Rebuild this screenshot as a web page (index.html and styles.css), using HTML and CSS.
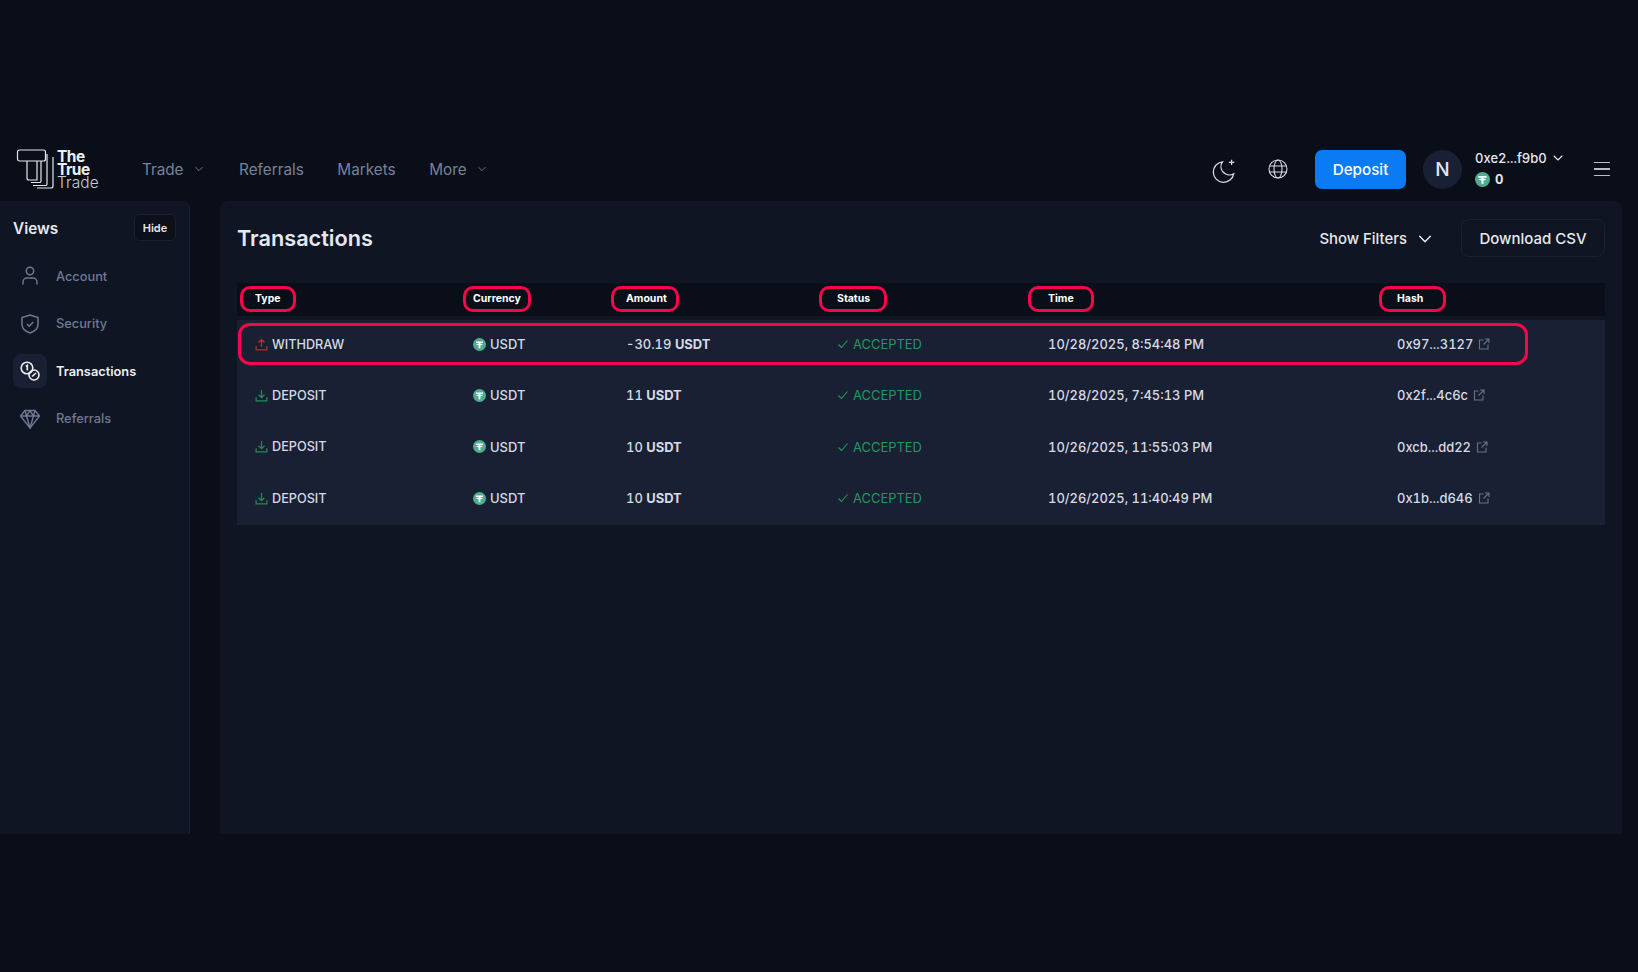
FILE: index.html
```html
<!DOCTYPE html>
<html lang="en">

<head>
  <meta charset="UTF-8">
  <meta name="viewport" content="width=device-width, initial-scale=1.0">
  <title>Transactions</title>
  <link rel="stylesheet" href="styles.css">
</head>

<body>
  <!-- icons used more than once -->
  <svg class="sprite" aria-hidden="true">
    <symbol id="chev" viewBox="0 0 12 12"><path d="M2 4l4 4 4-4" fill="none" stroke="currentColor" stroke-width="1.1" stroke-linecap="round" stroke-linejoin="round"/></symbol>
    <symbol id="tether" viewBox="0 0 16 16"><circle cx="8" cy="8" r="8" fill="#50ab8f"/><path d="M3.6 4.2h8.8v1.9H9.100v1.100c1.500.1 2.800.4 2.800.8s-1.300.7-2.800.8v3.700H6.900V8.800c-1.500-.1-2.800-.4-2.800-.8s1.300-.7 2.800-.8V6.100H3.600z" fill="#fff"/></symbol>
    <symbol id="down" viewBox="0 0 14 14"><path d="M7 1v8.200M3.800 6.200L7 9.300l3.200-3.100M1.200 9v3.800h11.600V9" fill="none" stroke="currentColor" stroke-width="1.400"/></symbol>
    <symbol id="up" viewBox="0 0 14 14"><path d="M7 9.800V1.800M3.800 4.800L7 1.600l3.200 3.200M1.200 8.500v4.300h11.600V8.500" fill="none" stroke="currentColor" stroke-width="1.400"/></symbol>
    <symbol id="check" viewBox="0 0 12 12"><path d="M1.500 6.500l3 3 6-7" fill="none" stroke="currentColor" stroke-width="1.100"/></symbol>
    <symbol id="ext" viewBox="0 0 12 12"><path d="M5.500 2H1.500v9H10V6.500M7 1h4v4M11 1L5.500 6.500" fill="none" stroke="currentColor" stroke-width="1.100"/></symbol>
  </svg>

  <header class="topbar">
    <a class="logo">
      <svg class="logo-mark" viewBox="0 0 40 42" fill="none" stroke="#e4e6ec" stroke-width="1.200">
        <path d="M3.500 2h24a2 2 0 0 1 2 2v7a2 2 0 0 1-2 2h-24a2 2 0 0 1-2-2V4a2 2 0 0 1 2-2z"/>
        <path d="M11 13v17a2 2 0 0 0 2 2h8V13"/>
        <path d="M25 13v20a1.500 1.500 0 0 1-1.500 1.500H15"/>
        <path d="M31 6v30a1.500 1.500 0 0 1-1.500 1.500H17"/>
        <path d="M37 9v29a2 2 0 0 1-2 2H21"/>
      </svg>
      <span class="logo-text"><b>The</b><b>True</b><span>Trade</span></span>
    </a>

    <nav class="topnav">
      <a class="topnav-link">Trade <svg class="chev-sm"><use href="#chev"/></svg></a>
      <a class="topnav-link">Referrals</a>
      <a class="topnav-link">Markets</a>
      <a class="topnav-link">More <svg class="chev-sm"><use href="#chev"/></svg></a>
    </nav>

    <div class="topbar-right">
      <svg class="icon-moon" viewBox="0 0 24 24" fill="none" stroke="#d8dbe4" stroke-width="1.200">
        <path d="M10.500 3.500a9.500 9.500 0 1 0 10.500 11 7.800 7.800 0 0 1-10.500-11z"/>
        <path d="M19 1.500v5M16.500 4h5"/>
      </svg>
      <svg class="icon-globe" viewBox="0 0 20 20" fill="none" stroke="#d8dbe4" stroke-width="1.100">
        <circle cx="10" cy="10" r="9"/>
        <ellipse cx="10" cy="10" rx="4" ry="9"/>
        <path d="M1.500 7h17M1.500 13h17"/>
      </svg>
      <button class="btn-deposit">Deposit</button>
      <div class="avatar">N</div>
      <div class="wallet">
        <div class="wallet-addr">0xe2...f9b0 <svg class="chev-wallet"><use href="#chev"/></svg></div>
        <div class="wallet-bal"><svg class="coin-lg"><use href="#tether"/></svg> 0</div>
      </div>
      <div class="burger"><i></i><i></i><i></i></div>
    </div>
  </header>

  <div class="layout">
    <aside class="sidebar">
      <div class="views-head">
        <h2>Views</h2>
        <button class="btn-hide">Hide</button>
      </div>
      <a class="side-link">
        <span class="side-icon">
          <svg viewBox="0 0 20 20" fill="none" stroke="currentColor" stroke-width="1.500"><circle cx="10" cy="5" r="3.700"/><path d="M3 18.500v-2.500a4 4 0 0 1 4-4h6a4 4 0 0 1 4 4v2.500"/></svg>
        </span>
        Account
      </a>
      <a class="side-link">
        <span class="side-icon">
          <svg viewBox="0 0 20 20" fill="none" stroke="currentColor" stroke-width="1.500"><path d="M10 1l8 2.500v7c0 4.500-3.500 7-8 8.500-4.500-1.500-8-4-8-8.500v-7z"/><path d="M7 10l2.200 2.200L13.200 8"/></svg>
        </span>
        Security
      </a>
      <a class="side-link active">
        <span class="side-icon">
          <svg viewBox="0 0 20 20" fill="none" stroke="currentColor" stroke-width="1.600"><circle cx="7" cy="7" r="5.800"/><path d="M5.800 5.300L7.300 4.300v5.200"/><circle cx="14" cy="14" r="5"/><path d="M12 15.500l4-3.500"/></svg>
        </span>
        Transactions
      </a>
      <a class="side-link">
        <span class="side-icon">
          <svg viewBox="0 0 20 20" fill="none" stroke="currentColor" stroke-width="1.400"><path d="M5 1.500h10L19.500 7 10 19 .5 7z"/><path d="M.5 7h19M6.500 7L10 19l3.500-12M5 1.500L6.500 7 10 1.500 13.500 7 15 1.500"/></svg>
        </span>
        Referrals
      </a>
    </aside>

    <main class="panel">
      <div class="panel-head">
        <h1>Transactions</h1>
        <div class="panel-actions">
          <a class="show-filters">Show Filters <svg class="chev-filter"><use href="#chev"/></svg></a>
          <button class="btn-csv">Download CSV</button>
        </div>
      </div>

      <div class="tx-table">
        <div class="tx-row tx-head">
          <div class="cell">Type<span class="ring ring-type"></span></div>
          <div class="cell">Currency<span class="ring ring-currency"></span></div>
          <div class="cell">Amount<span class="ring ring-amount"></span></div>
          <div class="cell">Status<span class="ring ring-status"></span></div>
          <div class="cell">Time<span class="ring ring-time"></span></div>
          <div class="cell">Hash<span class="ring ring-hash"></span></div>
        </div>

        <div class="tx-body">
          <!-- marca vermelha da primeira linha -->
          <span class="ring ring-row"></span>

          <div class="tx-row">
            <div class="cell type"><svg class="ico-type withdraw"><use href="#up"/></svg>WITHDRAW</div>
            <div class="cell cur"><svg class="coin"><use href="#tether"/></svg>USDT</div>
            <div class="cell amt">-30.19 <b>USDT</b></div>
            <div class="cell ok"><svg class="ico-check"><use href="#check"/></svg>ACCEPTED</div>
            <div class="cell">10/28/2025, 8:54:48 PM</div>
            <div class="cell hash">0x97...3127<svg class="ico-ext"><use href="#ext"/></svg></div>
          </div>

          <div class="tx-row">
            <div class="cell type"><svg class="ico-type deposit"><use href="#down"/></svg>DEPOSIT</div>
            <div class="cell cur"><svg class="coin"><use href="#tether"/></svg>USDT</div>
            <div class="cell amt">11 <b>USDT</b></div>
            <div class="cell ok"><svg class="ico-check"><use href="#check"/></svg>ACCEPTED</div>
            <div class="cell">10/28/2025, 7:45:13 PM</div>
            <div class="cell hash">0x2f...4c6c<svg class="ico-ext"><use href="#ext"/></svg></div>
          </div>

          <div class="tx-row">
            <div class="cell type"><svg class="ico-type deposit"><use href="#down"/></svg>DEPOSIT</div>
            <div class="cell cur"><svg class="coin"><use href="#tether"/></svg>USDT</div>
            <div class="cell amt">10 <b>USDT</b></div>
            <div class="cell ok"><svg class="ico-check"><use href="#check"/></svg>ACCEPTED</div>
            <div class="cell">10/26/2025, 11:55:03 PM</div>
            <div class="cell hash">0xcb...dd22<svg class="ico-ext"><use href="#ext"/></svg></div>
          </div>

          <div class="tx-row">
            <div class="cell type"><svg class="ico-type deposit"><use href="#down"/></svg>DEPOSIT</div>
            <div class="cell cur"><svg class="coin"><use href="#tether"/></svg>USDT</div>
            <div class="cell amt">10 <b>USDT</b></div>
            <div class="cell ok"><svg class="ico-check"><use href="#check"/></svg>ACCEPTED</div>
            <div class="cell">10/26/2025, 11:40:49 PM</div>
            <div class="cell hash">0x1b...d646<svg class="ico-ext"><use href="#ext"/></svg></div>
          </div>
        </div>
      </div>
    </main>
  </div>
</body>

</html>
```

FILE: styles.css
```css
/* pagina */
* {
  box-sizing: border-box;
}

html,
body {
  height: 100%;
}

body {
  margin: 0;
  padding-top: 145px;
  background: #0a0e19;
  color: #e6e8ef;
  font-family: Inter, "Noto Sans", sans-serif;
  overflow: hidden;
}

.sprite {
  position: absolute;
  width: 0;
  height: 0;
}

svg {
  display: block;
  flex: none;
}

h1,
h2 {
  margin: 0;
}

button {
  font-family: inherit;
  cursor: pointer;
}

/* topo */
.topbar {
  display: flex;
  align-items: center;
  height: 56px;
  padding: 0 28px 8px 16px;
}

.logo {
  display: flex;
  align-items: center;
  gap: 1px;
}

.logo-mark {
  width: 40px;
  height: 42px;
}

.logo-text {
  display: flex;
  flex-direction: column;
  font-size: 15.500px;
  line-height: 13px;
  letter-spacing: -0.5px;
  color: #eceef3;
}

.logo-text b {
  font-weight: 700;
}

.logo-text span {
  font-weight: 300;
  letter-spacing: 0.1px;
  color: #c8ccd6;
}

.topnav {
  display: flex;
  align-items: center;
  gap: 33.500px;
  margin-left: 43px;
}

.topnav-link {
  display: flex;
  align-items: center;
  gap: 10px;
  font-size: 15.300px;
  color: #77819c;
}

.topnav-link:first-child {
  margin-right: 2px;
}

.chev-sm {
  width: 10px;
  height: 10px;
  color: #77819c;
}

.topbar-right {
  display: flex;
  align-items: center;
  margin-left: auto;
}

.icon-moon {
  width: 26px;
  height: 26px;
  margin-top: 3px;
}

.icon-globe {
  width: 20px;
  height: 20px;
  margin-left: 31px;
}

.btn-deposit {
  width: 91px;
  height: 39px;
  margin-left: 27px;
  border: 0;
  border-radius: 7px;
  background: #0a7bf5;
  color: #fff;
  font-size: 15.200px;
  font-weight: 500;
}

.avatar {
  display: flex;
  align-items: center;
  justify-content: center;
  width: 39px;
  height: 39px;
  margin-left: 17px;
  border-radius: 50%;
  background: #1a2033;
  font-size: 19px;
  font-weight: 500;
}

.wallet {
  width: 119px;
  margin-left: 13px;
  font-size: 13px;
  font-weight: 500;
  font-variant-numeric: tabular-nums;
}

.wallet-addr,
.wallet-bal {
  display: flex;
  align-items: center;
}

.wallet-addr {
  gap: 5px;
  height: 20px;
}

.chev-wallet {
  width: 12px;
  height: 12px;
}

.wallet-bal {
  gap: 5px;
  height: 22px;
  font-weight: 700;
}

.coin-lg {
  width: 15px;
  height: 15px;
}

.burger {
  display: flex;
  flex-direction: column;
  gap: 5px;
  width: 16px;
}

.burger i {
  height: 1.500px;
  background: #b9bdc9;
}

/* corpo */
.layout {
  display: grid;
  grid-template-columns: 190px 1fr;
  gap: 30px;
  height: 633px;
  padding-right: 16px;
}

.sidebar {
  padding: 13px 13px;
  background: #0f1522;
  border-right: 1px solid #1a202d;
  border-radius: 0 8px 0 0;
}

.views-head {
  display: flex;
  align-items: center;
  justify-content: space-between;
  margin-bottom: 18px;
}

.views-head h2 {
  padding-top: 2px;
  font-size: 15.300px;
  font-weight: 600;
}

.btn-hide {
  width: 42px;
  height: 27px;
  padding: 0;
  border: 1px solid #1a2030;
  border-radius: 5px;
  background: #0b101b;
  color: #e6e8ef;
  font-size: 11px;
  font-weight: 600;
}

.side-link {
  display: flex;
  align-items: center;
  gap: 9px;
  height: 34px;
  margin-bottom: 13.500px;
  font-size: 12.800px;
  font-weight: 500;
  color: #6f7993;
}

.side-link.active {
  color: #eceef3;
  font-weight: 600;
}

.side-icon {
  display: flex;
  align-items: center;
  justify-content: center;
  width: 34px;
  height: 34px;
  border-radius: 8px;
}

.side-icon svg {
  width: 20px;
  height: 20px;
}

.active .side-icon {
  background: #1a2033;
}

.panel {
  padding: 18px 17px;
  background: #0f1522;
  border-radius: 8px 8px 0 0;
}

.panel-head {
  display: flex;
  align-items: center;
  justify-content: space-between;
  height: 38px;
  margin-bottom: 26px;
}

.panel-head h1 {
  font-size: 21.700px;
  font-weight: 600;
}

.panel-actions {
  display: flex;
  align-items: center;
  gap: 28px;
}

.show-filters {
  display: flex;
  align-items: center;
  gap: 10px;
  padding-top: 1px;
  font-size: 14.900px;
  font-weight: 500;
}

.chev-filter {
  width: 16px;
  height: 16px;
}

.btn-csv {
  width: 144px;
  height: 38px;
  border: 1px solid #1a2030;
  border-radius: 8px;
  background: #0f1522;
  color: #e6e8ef;
  font-size: 15px;
  font-weight: 500;
}

/* tabela */
.tx-row {
  display: grid;
  grid-template-columns: 218px 153px 211px 211px 349px 226px;
  align-items: center;
  height: 51.300px;
  padding-bottom: 3px;
  font-size: 12.950px;
  font-weight: 500;
  font-variant-numeric: tabular-nums;
  color: #d6dae5;
}

.cell {
  position: relative;
  display: flex;
  align-items: center;
  padding-left: 18px;
  white-space: pre;
}

.cell.type {
  font-size: 12.700px;
}

.tx-row.tx-head {
  height: 33px;
  background: #0a0e19;
  font-size: 10.500px;
  font-weight: 700;
  color: #fff;
}

.tx-body {
  position: relative;
  margin-top: 4px;
  background: #1a2033;
}

/* marcas vermelhas */
.ring {
  position: absolute;
  border: 3px solid #f8064c;
  pointer-events: none;
}

.tx-head .ring {
  top: -6px;
  height: 26px;
  border-radius: 10px;
}

.ring-type {
  left: 3px;
  width: 56px;
}

.ring-currency {
  left: 8px;
  width: 68px;
}

.ring-amount {
  left: 3px;
  width: 68px;
}

.ring-status {
  left: 0;
  width: 68px;
}

.ring-time {
  left: -2px;
  width: 66px;
}

.ring-hash {
  left: 0;
  width: 67px;
}

.ring-row {
  top: 3px;
  left: 1px;
  width: 1290px;
  height: 42px;
  border-radius: 12px;
}

.ico-type {
  width: 13px;
  height: 13px;
  margin-right: 4px;
}

.withdraw {
  color: #b32b2e;
}

.deposit {
  color: #1f8a57;
}

.coin {
  width: 13px;
  height: 13px;
  margin-right: 4px;
}

.amt b {
  font-weight: 700;
}

.ok {
  color: #1f9a5c;
  font-weight: 400;
}

.ico-check {
  width: 12px;
  height: 12px;
  margin-right: 4px;
}

.ico-ext {
  width: 12px;
  height: 12px;
  margin-left: 5px;
  color: #6a7085;
}
```
